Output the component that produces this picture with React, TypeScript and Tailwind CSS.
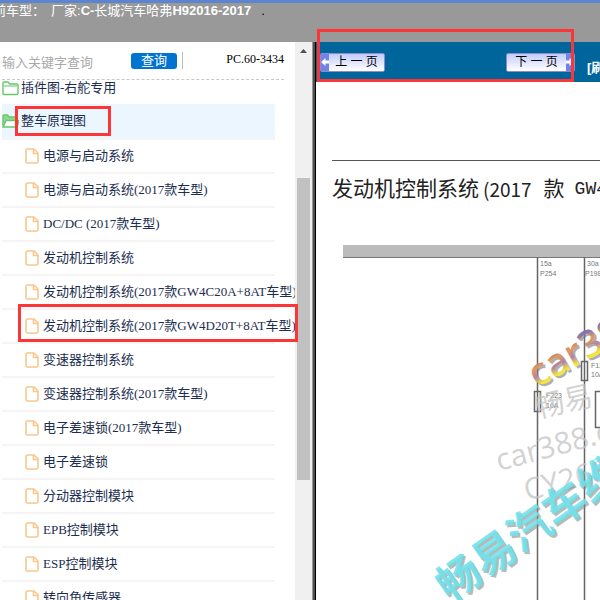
import { useState } from 'react';

const items = [
  '电源与启动系统',
  '电源与启动系统(2017款车型)',
  'DC/DC (2017款车型)',
  '发动机控制系统',
  '发动机控制系统(2017款GW4C20A+8AT车型)',
  '发动机控制系统(2017款GW4D20T+8AT车型)',
  '变速器控制系统',
  '变速器控制系统(2017款车型)',
  '电子差速锁(2017款车型)',
  '电子差速锁',
  '分动器控制模块',
  'EPB控制模块',
  'ESP控制模块',
  '转向角传感器',
];

const marked = 5;

const FolderIcon = ({ open = false }: { open?: boolean }) => (
  <svg width="17" height="16" viewBox="0 0 17 16" fill="none" stroke="#66c96a" strokeWidth="1.4" className="shrink-0">
    {open ? (
      <>
        <path d="M1 13V3q0-1 1-1h3.5l1.5 2h7q1 0 1 1v3" fill="#8fd694" />
        <path d="M1 14 4 7.500H17L15 14z" fill="#fff" />
      </>
    ) : (
      <>
        <path d="M1 3q0-1 1-1h4l1.500 2h7.500q1 0 1 1v8.500q0 1-1 1h-13q-1 0-1-1z" fill="#fff" />
        <path d="M1 6h15" stroke="#8fd694" />
      </>
    )}
  </svg>
);

const FileIcon = () => (
  <svg width="14" height="16" viewBox="0 0 14 16" fill="none" stroke="#f9c88c" strokeWidth="1.6" className="shrink-0">
    <path d="M2.500 1h6.500l4 4v8.500q0 1.500-1.500 1.500h-9q-1.500 0-1.500-1.500v-11q0-1.500 1.500-1.500z" fill="#fff" />
    <path d="M8.500 1v4.500h4.500" />
  </svg>
);

const Arrow = ({ right = false }: { right?: boolean }) => (
  <span className="flex w-2 shrink-0 items-center justify-center self-stretch bg-[#6f83ea]">
    <svg width="8" height="8" viewBox="0 0 8 8" fill="#fff">
      {right ? <path d="M0 2.500h3.500V0L8 4 3.500 8V5.500H0z" /> : <path d="M8 2.500H4.500V0L0 4l4.500 4V5.500H8z" />}
    </svg>
  </span>
);

const Sidebar = () => {
  const [keyword, setKeyword] = useState('');

  return (
    <aside className="flex w-[295px] shrink-0 flex-col bg-white">
      <form className="mr-[11px] ml-0.5 flex h-[38px] shrink-0 items-center border-b border-dashed border-[#c8c8c8]" onSubmit={(e) => e.preventDefault()}>
        <input
          type="text"
          aria-label="输入关键字查询"
          placeholder="输入关键字查询"
          value={keyword}
          onChange={(e) => setKeyword(e.target.value)}
          className="mt-1 w-[129px] text-[13px] outline-none placeholder:text-[#a9a9a9]"
        />
        <button type="submit" className="h-4 w-[46px] rounded-[3px] bg-[#0074d0] text-[13px] leading-4 text-white">
          查询
        </button>
        <span className="ml-[5px] h-[17px] w-px bg-[#bbb]" />
        <span className="mb-1 ml-auto font-['Liberation_Serif',serif] text-xs text-black">PC.60-3434</span>
      </form>

      <nav className="ml-0.5 font-['Liberation_Serif','Noto_Sans_CJK_SC',serif] text-[13px] text-[#1c2e50]">
        <a href="#connector" className="flex h-6 items-start gap-0.5 whitespace-nowrap leading-4">
          <FolderIcon />
          插件图-右舵专用
        </a>
        <a href="#schematic" className="relative mr-5 flex h-9 items-center gap-0.5 border-b-2 border-[#f5f5f5] bg-[#ecf6ff]">
          <FolderIcon open />
          整车原理图
          <span className="absolute top-0.5 left-[13px] h-[30px] w-24 border-[3px] border-[#fc3636]" />
        </a>
        <ul>
          {items.map((item, i) => (
            <li key={item} className="relative mr-5 h-[34px] border-b-2 border-[#f5f5f5]">
              <a href={`#item-${i}`} className="-mr-5 ml-[23px] flex h-full items-center gap-1 overflow-hidden whitespace-nowrap">
                <FileIcon />
                {item}
              </a>
              {i === marked && (
                <span className="absolute -top-1.5 left-4 z-10 h-[38px] w-[280px] border-[3px] border-[#fc3636]" />
              )}
            </li>
          ))}
        </ul>
      </nav>
    </aside>
  );
};

const Diagram = () => (
  <svg className="min-h-0 w-full flex-1" fontFamily="'Liberation Sans', sans-serif">
    <defs>
      <linearGradient id="rainbow" x1="0" y1="0" x2="0" y2="1">
        <stop offset="0.3" stopColor="#7f74b4" />
        <stop offset="0.45" stopColor="#e59a55" />
        <stop offset="0.6" stopColor="#b184a8" />
        <stop offset="0.75" stopColor="#f4e63c" />
      </linearGradient>
    </defs>
    <rect x="27" y="0" width="100%" height="12" fill="#bbb" />
    <path d="M27 12.500H4000" stroke="#777" />
    <g stroke="#666" strokeWidth="1.500" fill="none">
      <path d="M221.500 12V4000M268.500 12V4000" />
      <rect x="218.500" y="146.500" width="6" height="20" />
      <rect x="265.500" y="116.500" width="6" height="19" />
      <rect x="279.500" y="146.500" width="60" height="36" />
    </g>
    <g fontSize="7" fill="#777">
      <text x="224" y="21">15a</text>
      <text x="224" y="31">P254</text>
      <text x="271" y="21">30a</text>
      <text x="269" y="31">P198</text>
      <text x="230" y="153">F223</text>
      <text x="230" y="163">10A</text>
      <text x="275" y="123">F12</text>
      <text x="275" y="132">10A</text>
    </g>
    <g fill="#c4c4c4" fillOpacity="0.75" fontFamily="'Open Sans', 'Noto Sans CJK SC', sans-serif">
      <text fontSize="29" transform="translate(222 173) rotate(-13)">畅易</text>
      <text fontSize="30" transform="translate(183 226) rotate(-15)">car388.com</text>
      <text fontSize="30" transform="translate(211 256) rotate(-15)">CY26</text>
    </g>
    <g fontWeight="600" fontFamily="'Open Sans', sans-serif" fontSize="38">
      <text fill="#777" fillOpacity="0.6" transform="translate(223 145) rotate(-29)">car388</text>
      <text fill="url(#rainbow)" transform="translate(221 143) rotate(-29)">car388</text>
    </g>
    <g fontWeight="700" fontFamily="'Noto Sans CJK SC', sans-serif" fontSize="43">
      <text fill="#8c8c84" fillOpacity="0.6" transform="translate(136 360) rotate(-35)">畅易汽车维修</text>
      <text fill="#6ee2ee" fillOpacity="0.9" transform="translate(134 358) rotate(-35)">畅易汽车维修</text>
    </g>
  </svg>
);

const Viewer = () => (
  <main className="relative flex min-w-0 flex-1 flex-col bg-white">
    <div className="flex h-10 shrink-0 items-center overflow-hidden bg-[#00659a] pl-1 whitespace-nowrap">
      <button type="button" className="flex h-[19px] w-[65px] shrink-0 items-center rounded-[2px] border border-[#8c8ccc] bg-linear-to-b from-[#c3ccfa] to-white text-xs leading-4 text-black">
        <Arrow />
        <span className="flex-1">上 一 页</span>
      </button>
      <button type="button" className="ml-[121px] flex h-[19px] w-[69px] shrink-0 items-center rounded-[2px] border border-[#8c8ccc] bg-linear-to-b from-[#c3ccfa] to-white text-xs leading-4 text-black">
        <span className="flex-1">下 一 页</span>
        <Arrow right />
      </button>
      <a href="#refresh" className="mt-3 ml-3 text-[13px] font-bold text-white">[刷新]</a>
    </div>
    <div className="absolute -top-[13px] left-px h-[53px] w-[257px] border-[3px] border-[#fc3636]" />

    <hr className="mt-[78px] ml-4 border-[#555]" />
    <h1 className="mt-3 ml-4 flex h-8 shrink-0 items-center overflow-hidden text-[21px] whitespace-nowrap text-[#222]">
      发动机控制系统
      <span className="ml-1 font-['Noto_Sans_CJK_SC',sans-serif] text-[19px]">(2017</span>
      <span className="ml-3">款</span>
      <span className="ml-2.5 font-['Liberation_Mono',monospace] text-lg">GW4D20T</span>
    </h1>
    <div className="mt-10 flex min-h-0 flex-1 flex-col">
      <Diagram />
    </div>
  </main>
);

export default function App() {
  return (
    <div className="flex h-screen flex-col overflow-hidden bg-white font-['Liberation_Sans','Noto_Sans_CJK_SC',sans-serif]">
      <header className="h-[42px] shrink-0 border-t-[3px] border-[#5c84d0] bg-[#999] text-[13px] leading-4 whitespace-nowrap text-white">
        <div className="-ml-[7px] flex">
          <span>前车型：</span>
          <span className="ml-1.5">厂家:</span>
          <span className="font-bold">C-</span>
          <span>长城汽车哈弗</span>
          <span className="font-bold">H92016-2017</span>
          <span className="ml-2.5 text-black">.</span>
        </div>
      </header>

      <div className="flex min-h-0 flex-1">
        <Sidebar />
        <div className="flex w-[17px] shrink-0 flex-col items-center bg-[#f0f0f0]">
          <svg width="7" height="4" viewBox="0 0 7 4" fill="#505050" className="mt-[7px] shrink-0">
            <path d="M3.500 0 7 4H0z" />
          </svg>
          <div className="mt-[125px] h-[302px] w-[13px] shrink-0 bg-[#c1c1c1]" />
        </div>
        <div className="w-1 shrink-0 border-r border-l border-r-black border-l-[#999] bg-[#505050]" />
        <Viewer />
      </div>
    </div>
  );
}
